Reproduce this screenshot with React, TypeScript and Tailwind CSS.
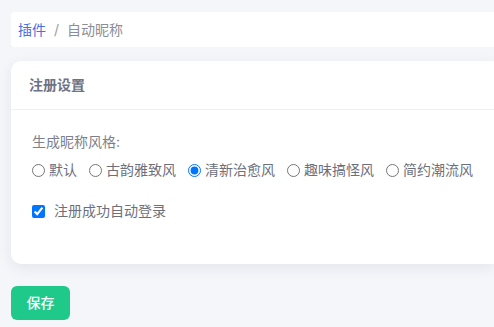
import { useState } from 'react';

const styles = [
  { value: 'default', label: '默认' },
  { value: 'classic', label: '古韵雅致风' },
  { value: 'fresh', label: '清新治愈风' },
  { value: 'funny', label: '趣味搞怪风' },
  { value: 'trendy', label: '简约潮流风' },
];

export default function App() {
  const [style, setStyle] = useState('fresh');
  const [autoLogin, setAutoLogin] = useState(true);

  return (
    <div
      className="min-h-screen bg-[#f5f6fa] pl-[11px] pt-[12px] text-sm"
      style={{ fontFamily: 'Inter, "Noto Sans CJK SC", sans-serif' }}
    >
      {/* breadcrumb */}
      <div className="flex h-[35px] items-center rounded-l bg-white pl-[7px] text-sm">
        <span className="text-[#4a6fe0]">插件</span>
        <span className="mx-[8px] text-[#9a9ca6]">/</span>
        <span className="text-[#8b8d98]">自动昵称</span>
      </div>

      {/* settings card */}
      <div className="mt-[14px] h-[203px] rounded-l-[10px] bg-white shadow-[0_4px_14px_rgba(30,40,80,0.08)]">
        <div className="flex h-[49px] items-center border-b border-[#eef0f4] pl-[18px] font-bold text-[#6f7282]">
          注册设置
        </div>
        <div className="px-[21px] pt-[22px]">
          <div className="leading-[20px] text-[#7c7f8c]">生成昵称风格:</div>
          <div className="mt-[8px] flex items-center gap-[12px]">
            {styles.map((s) => (
              <label key={s.value} className="flex items-center text-[#6d707c]">
                <input
                  type="radio"
                  name="style"
                  checked={style === s.value}
                  onChange={() => setStyle(s.value)}
                  className="m-0 h-[13px] w-[13px]"
                />
                <span className="ml-[4px] leading-[20px]">{s.label}</span>
              </label>
            ))}
          </div>
          <label className="mt-[21px] flex items-center text-[#6d707c]">
            <input
              type="checkbox"
              checked={autoLogin}
              onChange={(e) => setAutoLogin(e.target.checked)}
              className="m-0 h-[13px] w-[13px]"
            />
            <span className="ml-[9px] leading-[20px]">注册成功自动登录</span>
          </label>
        </div>
      </div>

      <button className="mt-[22px] h-[34px] w-[59px] rounded-[6px] bg-[#1fc98a] text-sm font-medium text-white">
        保存
      </button>
    </div>
  );
}
